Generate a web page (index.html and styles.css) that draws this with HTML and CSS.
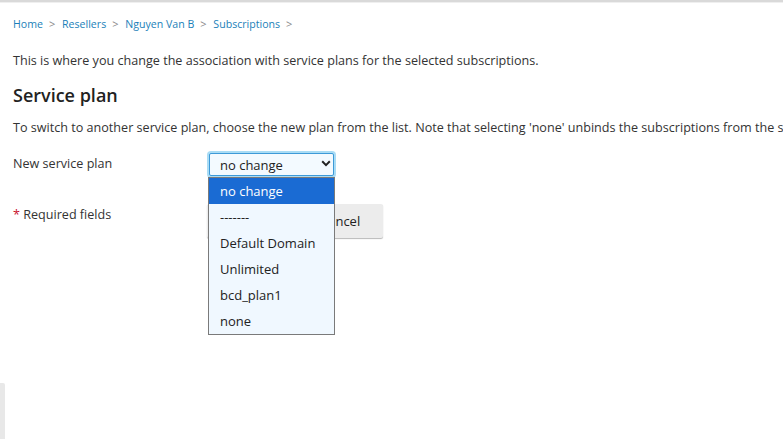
FILE: index.html
```html
<!DOCTYPE html>
<html lang="en">
<head>
<meta charset="utf-8">
<title>Change Service Plan</title>
<link rel="stylesheet" href="styles.css">
</head>
<body>
<div class="topline"></div>
<div class="page">
  <nav class="crumbs">
    <a href="#">Home</a><span class="sep">&gt;</span>
    <a href="#">Resellers</a><span class="sep">&gt;</span>
    <a href="#">Nguyen Van B</a><span class="sep">&gt;</span>
    <a href="#">Subscriptions</a><span class="sep">&gt;</span>
  </nav>
  <p class="intro">This is where you change the association with service plans for the selected subscriptions.</p>
  <h2 class="title">Service plan</h2>
  <p class="hint">To switch to another service plan, choose the new plan from the list. Note that selecting 'none' unbinds the subscriptions from the selected service plans.</p>
  <div class="row plan">
    <div class="label">New service plan</div>
    <div class="field">
      <div class="select">
        <span>no change</span>
        <svg class="chev" width="10" height="7" viewBox="0 0 10 7"><path d="M1.2 1.3 5 5.1 8.8 1.3" fill="none" stroke="#222" stroke-width="2"/></svg>
      </div>
      <ul class="options">
        <li class="sel">no change</li>
        <li>-------</li>
        <li>Default Domain</li>
        <li>Unlimited</li>
        <li>bcd_plan1</li>
        <li>none</li>
      </ul>
    </div>
  </div>
  <div class="row actions">
    <div class="label"><span class="req">*</span> Required fields</div>
    <div class="buttons">
      <button class="btn ok">OK</button>
      <button class="btn">Cancel</button>
    </div>
  </div>
</div>
<div class="sidestub"></div>
</body>
</html>
```
FILE: styles.css
```css
html, body {
  margin: 0;
  padding: 0;
  overflow: hidden;
  background: #fff;
}
body {
  font-family: "Open Sans", "Liberation Sans", sans-serif;
  color: #333;
  font-size: 12.6px;
  height: 439px;
  position: relative;
}
.topline {
  height: 2px;
  background: #d9d9d9;
  border-bottom: 1px solid #efefef;
}
.page {
  padding: 0 13px;
}
.crumbs {
  padding-top: 13px;
  font-size: 10.6px;
  line-height: 16px;
  white-space: nowrap;
}
.crumbs a {
  color: #1b7fb9;
  text-decoration: none;
}
.crumbs .sep {
  display: inline-block;
  color: #888;
  margin: 0 4px 0 6px;
  font-size: 11px;
}
.intro {
  margin: 20px 0 0;
  line-height: 18px;
}
.title {
  margin: 12px 0 0;
  font-size: 18px;
  font-weight: 600;
  line-height: 26px;
  color: #222;
}
.hint {
  margin: 11px 0 0;
  line-height: 18px;
  white-space: nowrap;
}
.row {
  display: flex;
  align-items: flex-start;
}
.label {
  width: 194px;
  line-height: 18px;
  flex: none;
}
.plan {
  margin-top: 14px;
}
.plan .label {
  padding-top: 4px;
}
.field {
  position: relative;
}
.select {
  box-sizing: border-box;
  width: 125px;
  height: 23px;
  margin: 2px 0 0 2px;
  border: 1px solid #3d9ad8;
  box-shadow: 0 0 0 2px #a9dcf5;
  border-radius: 2px;
  background: #f3faff;
  display: flex;
  align-items: center;
  justify-content: space-between;
  padding: 0 2px 0 10px;
  color: #222;
  font-size: 13px;
}
.select span {
  line-height: 18px;
}
.chev {
  display: block;
  margin-top: -2px;
}
.options {
  position: absolute;
  left: 1px;
  top: 26px;
  z-index: 5;
  margin: 0;
  padding: 0;
  list-style: none;
  width: 127px;
  box-sizing: border-box;
  border: 1px solid #7a7a7a;
  background: #f0f8ff;
  color: #222;
  font-size: 13px;
}
.options li {
  height: 26px;
  line-height: 26px;
  padding-left: 11px;
  white-space: nowrap;
}
.options li.sel {
  background: #1a6bd3;
  color: #fff;
}
.actions {
  margin-top: 28px;
}
.actions .label {
  padding-top: 2px;
}
.req {
  color: #c8102e;
}
.buttons {
  display: flex;
  gap: 6px;
}
.btn {
  font-family: "Open Sans", "Liberation Sans", sans-serif;
  font-size: 13px;
  color: #222;
  background: #ececec;
  border: none;
  border-radius: 2px;
  box-shadow: 0 1px 1px rgba(0, 0, 0, 0.28);
  height: 34px;
  padding: 0 23px;
}
.btn.ok {
  min-width: 84px;
}
.sidestub {
  position: absolute;
  left: 0;
  top: 383px;
  width: 5px;
  height: 56px;
  background: #e8e8e8;
  border-top-right-radius: 2px;
}
```
